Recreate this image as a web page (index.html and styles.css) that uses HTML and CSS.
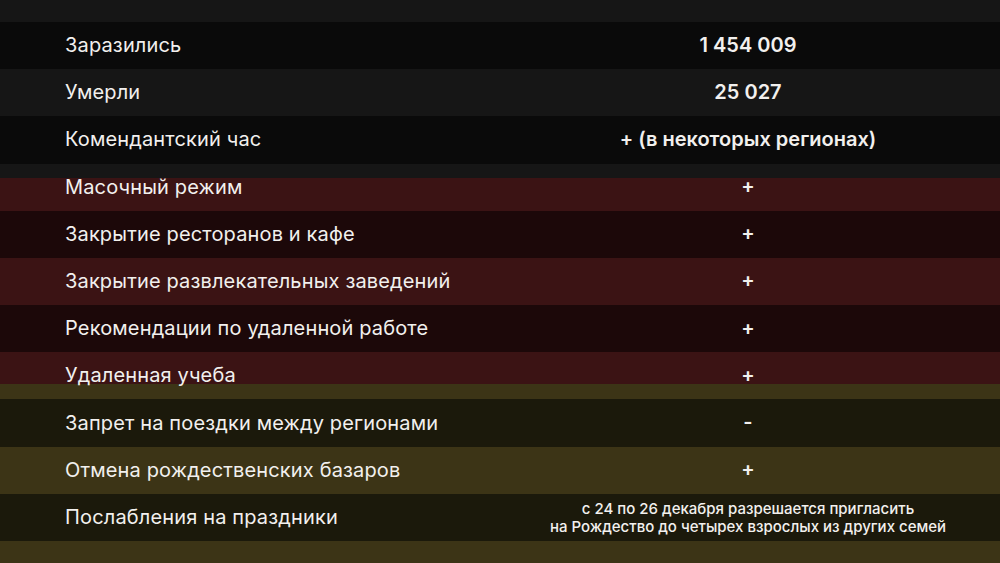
FILE: index.html
```html
<!DOCTYPE html>
<html lang="ru">
<head>
<meta charset="utf-8">
<link rel="stylesheet" href="styles.css">
</head>
<body>
<div class="table">
  <div class="band"></div>
  <div class="row dark-gray"><div class="label">Заразились</div><div class="value">1 454 009</div></div>
  <div class="row"><div class="label">Умерли</div><div class="value">25 027</div></div>
  <div class="row dark-gray"><div class="label">Комендантский час</div><div class="value">+ (в некоторых регионах)</div></div>
  <div class="row"><div class="label">Масочный режим</div><div class="value">+</div></div>
  <div class="row dark-red"><div class="label">Закрытие ресторанов и кафе</div><div class="value">+</div></div>
  <div class="row"><div class="label">Закрытие развлекательных заведений</div><div class="value">+</div></div>
  <div class="row dark-red"><div class="label">Рекомендации по удаленной работе</div><div class="value">+</div></div>
  <div class="row"><div class="label">Удаленная учеба</div><div class="value">+</div></div>
  <div class="row dark-olive"><div class="label">Запрет на поездки между регионами</div><div class="value">-</div></div>
  <div class="row"><div class="label">Отмена рождественских базаров</div><div class="value">+</div></div>
  <div class="row dark-olive"><div class="label">Послабления на праздники</div><div class="value note">с 24 по 26 декабря разрешается пригласить<br>на Рождество до четырех взрослых из других семей</div></div>
  <div class="band"></div>
</div>
</body>
</html>
```
FILE: styles.css
```css
html, body {
  margin: 0;
  padding: 0;
}
body {
  width: 1000px;
  height: 563px;
  overflow: hidden;
  background: #161616;
  font-family: "Inter", "Open Sans", sans-serif;
  color: #f2f0ee;
}
.table {
  height: 563px;
  display: grid;
  grid-template-rows: 22px repeat(11, 1fr) 22px;
  background: linear-gradient(to bottom,
    #161616 0, #161616 178px,
    #3b1314 178px, #3b1314 384px,
    #3c3416 384px, #3c3416 100%);
}
.row {
  display: grid;
  grid-template-columns: 436px 1fr;
  align-items: center;
  padding-left: 65px;
  padding-right: 5px;
}
.dark-gray { background: #0a0a0a; }
.dark-red { background: #1c0809; }
.dark-olive { background: #1b190b; }
.label {
  font-size: 20px;
  font-weight: 400;
  letter-spacing: 0.15px;
  padding-bottom: 1px;
}
.value {
  text-align: center;
  font-size: 20px;
  font-weight: 600;
  padding-bottom: 2px;
}
.note {
  font-size: 15px;
  font-weight: 500;
  line-height: 18px;
  padding-top: 1px;
  padding-bottom: 0;
}
```
